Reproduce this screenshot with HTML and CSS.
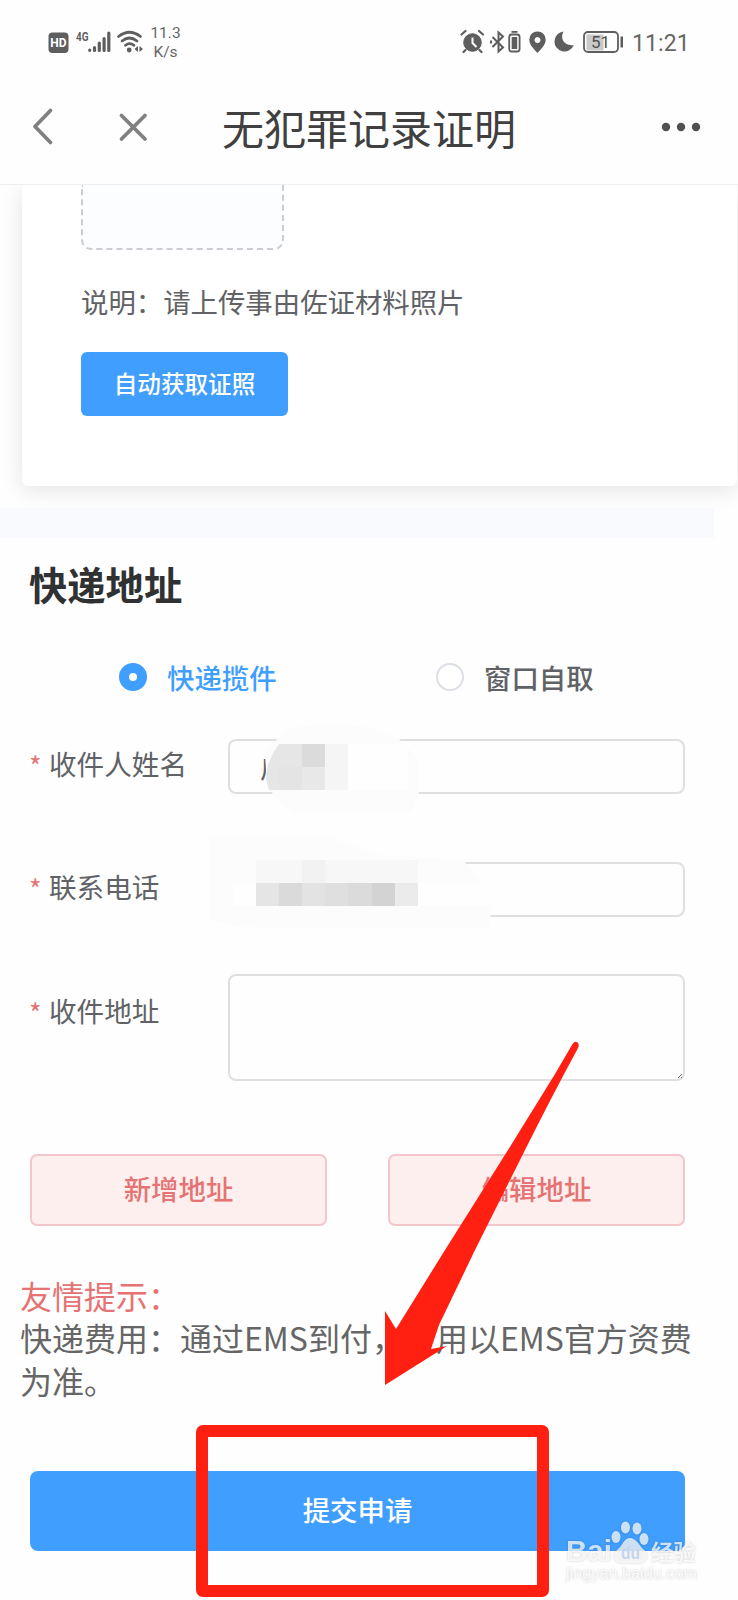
FILE: index.html
```html
<!DOCTYPE html>
<html lang="zh-CN">
<head>
<meta charset="utf-8">
<title>无犯罪记录证明</title>
<link rel="stylesheet" href="styles.css">
</head>
<body>
<div class="screen">
  <div class="status">
    <svg class="status-left" width="98" height="32" viewBox="0 0 98 32">
      <rect x="0.500" y="6.500" width="20" height="20.500" rx="4" fill="#5e5e5e"/>
      <text x="10.500" y="21.300" class="hd" text-anchor="middle">HD</text>
      <text x="28" y="15" class="gen" textLength="12.500" lengthAdjust="spacingAndGlyphs">4G</text>
      <g stroke="#5e5e5e" stroke-width="3.200" stroke-linecap="round">
        <path d="M41.700 24.200v.1M46.500 24.500v-3M51.300 24.500v-7.500M56.100 24.500v-12M60.800 24.500V7"/>
      </g>
      <g fill="none" stroke="#5e5e5e" stroke-width="2.700" stroke-linecap="round">
        <path d="M70.500 10.500q11-8.500 22 0M74 15q7.500-6 15 0M77.500 19.300q4-3.200 8.500 0"/>
      </g>
      <circle cx="81.200" cy="24" r="2.400" fill="#5e5e5e"/>
      <path d="M90 20v6l-3.500-3zM91.500 20v6l3.500-3z" fill="#5e5e5e"/>
    </svg>
    <div class="speed"><span>11.3</span><span>K/s</span></div>
    <svg class="status-right" width="164" height="32" viewBox="0 0 164 32">
      <g fill="#5e5e5e" stroke="#5e5e5e">
        <circle cx="12.500" cy="16.500" r="8.800"/>
        <path d="M1.500 8.500l4-3.500M19 5l4 3.500M5.500 24l-2 2M19.500 24l2 2" stroke-width="2.200" stroke-linecap="round"/>
        <path d="M12.500 11.500V17l4 4" fill="none" stroke="#fff" stroke-width="2"/>
      </g>
      <path d="M32.500 11L43 21.500 38.500 25.500V6.500L43 10.500 32.500 21M31 14.500v3" fill="none" stroke="#5e5e5e" stroke-width="2"/>
      <g fill="#5e5e5e">
        <path d="M51.500 5h6v1.800h-6z"/>
        <rect x="49.200" y="8.500" width="10.400" height="17" rx="2.500" fill="none" stroke="#5e5e5e" stroke-width="1.800"/>
        <rect x="51.700" y="11" width="5.500" height="12"/>
        <path d="M77.500 5.500a8 8 0 0 1 8.200 8.200c0 4.500-4.500 9.500-8.200 13.300-3.700-3.800-8.200-8.800-8.200-13.300a8 8 0 0 1 8.200-8.200zm0 5.600a3 3 0 1 0 .01 0z" fill-rule="evenodd"/>
        <path d="M103.500 5.500c-4 7 1 15 10.300 13.500a10 10 0 1 1-10.300-13.500z"/>
        <rect x="126.500" y="8.500" width="17" height="16" fill="#c9c9c9"/>
        <rect x="124" y="6" width="34" height="20" rx="4" fill="none" stroke="#5e5e5e" stroke-width="1.800"/>
        <path d="M160.500 10.500h2.500v11h-2.500z"/>
      </g>
      <text x="131" y="22" class="battery">51</text>
    </svg>
    <span class="clock">11:21</span>
  </div>

  <header class="nav">
    <svg class="nav-icons" width="120" height="40" viewBox="0 0 120 40">
      <path d="M20.500 4.500L5 20.500l15.500 16" fill="none" stroke="#808080" stroke-width="3.800" stroke-linecap="round" stroke-linejoin="round"/>
      <path d="M91.500 9.500l23.500 23.500M115 9.500L91.500 33" fill="none" stroke="#808080" stroke-width="3.800" stroke-linecap="round"/>
    </svg>
    <h1 class="title">无犯罪记录证明</h1>
    <svg class="more" width="40" height="10" viewBox="0 0 40 10" fill="#505050"><circle cx="5" cy="5" r="4.200"/><circle cx="20" cy="5" r="4.200"/><circle cx="35" cy="5" r="4.200"/></svg>
  </header>

  <section class="card-area">
    <div class="card">
      <div class="upload"></div>
      <p class="note">说明：请上传事由佐证材料照片</p>
      <button class="fetch">自动获取证照</button>
    </div>
    <div class="band"></div>
  </section>

  <section class="address">
    <h2 class="heading">快递地址</h2>
    <div class="radios">
      <label class="radio checked"><i class="dot"></i>快递揽件</label>
      <label class="radio"><i class="dot"></i>窗口自取</label>
    </div>
    <div class="row name-row"><span class="star">*</span><span class="label">收件人姓名</span>
      <div class="input">广
        <svg class="mosaic mosaic-name" width="156" height="92" viewBox="0 0 156 92">
          <path d="M0 32L8 20 24 6Q64-4 105 5L134 16 150 32 154 44V70L144 90H30L14 80 2 62z" fill="#fcfcfc"/>
          <path d="M3 42L8 30 14 21H60V67H4Q-1 55 3 42z" fill="#e6e6e6"/>
          <path d="M14 44h23v23H14z" fill="#e4e4e4"/><path d="M37 21h23v23H37z" fill="#dbdbdb"/><path d="M37 44h23v23H37z" fill="#e8e8e8"/><path d="M60 21h23v46H60z" fill="#f5f5f5"/><path d="M83 21h60v46H83z" fill="#fefefe"/>
        </svg>
      </div>
    </div>
    <div class="row phone-row"><span class="star">*</span><span class="label">联系电话</span>
      <div class="input">
        <svg class="mosaic mosaic-phone" width="284" height="94" viewBox="0 0 284 94">
          <path d="M0 0H120L170 18 254 23 274 46H283V69L280 91H80L30 90 0 82z" fill="#fcfcfc"/>
          <path d="M24 46h23v23H24z" fill="#fefefe"/><path d="M47 23h162v23H47z" fill="#f7f7f7"/><path d="M93 23h23v23H93z" fill="#f2f2f2"/><path d="M209 46h74v23h-74z" fill="#fefefe"/>
          <path d="M47 46h23v23H47z" fill="#e5e5e5"/><path d="M70 46h23v23H70z" fill="#dadada"/><path d="M93 46h23v23H93z" fill="#e3e3e3"/><path d="M116 46h23v23h-23z" fill="#dfdfdf"/><path d="M139 46h24v23h-24z" fill="#dbdbdb"/><path d="M163 46h23v23h-23z" fill="#d3d3d3"/><path d="M186 46h23v23h-23z" fill="#ebebeb"/>
        </svg>
      </div>
    </div>
    <div class="row place-row"><span class="star">*</span><span class="label">收件地址</span>
      <div class="input area"><svg class="grip" width="6" height="6" viewBox="0 0 6 6"><path d="M1 5l4-4M4 5l1-1" stroke="#555" stroke-width=".8"/></svg></div>
    </div>
    <div class="pair">
      <button class="soft">新增地址</button>
      <button class="soft">编辑地址</button>
    </div>
    <div class="tips">
      <p class="tips-title">友情提示：</p>
      <p>快递费用：通过EMS到付，费用以EMS官方资费为准。</p>
    </div>
    <button class="submit">提交申请</button>
  </section>

  <svg class="arrow" width="200" height="350" viewBox="380 1040 200 350">
    <path d="M572.500 1044Q575 1040.500 577.500 1042.500T577.500 1049Q552 1096 525 1150L475 1250 439 1325 431 1349 447 1346 385 1385V1311L396 1329 445 1250 508 1150 555 1074z" fill="#ff2012"/>
  </svg>
  <div class="frame"></div>
  <svg class="watermark" width="140" height="70" viewBox="0 0 140 70">
    <g class="wm-mark">
      <text x="4" y="44" class="wm-logo" textLength="46" lengthAdjust="spacingAndGlyphs">Bai</text>
      <ellipse cx="54" cy="20" rx="4.500" ry="6"/><ellipse cx="63.500" cy="10.500" rx="4.500" ry="6"/><ellipse cx="75" cy="11.500" rx="4.500" ry="6"/><ellipse cx="82" cy="22" rx="4.500" ry="6"/>
      <path d="M68 21c6 0 9 7 13 11 7 5 4 14-4 14H59c-8 0-9-9-3-14 5-4 6-11 12-11z"/>
      <text x="89" y="43" class="wm-cn" textLength="45" lengthAdjust="spacingAndGlyphs">经验</text>
      <text x="4" y="62" class="wm-url" textLength="131" lengthAdjust="spacingAndGlyphs">jingyan.baidu.com</text>
    </g>
    <text x="59" y="42" class="wm-du" textLength="19" lengthAdjust="spacingAndGlyphs">du</text>
  </svg>
</div>
</body>
</html>
```
FILE: styles.css
```css
* { box-sizing: border-box; }
body {
  margin: 0;
  background: #fefefe;
  font-family: "Noto Sans CJK SC", sans-serif;
  color: #606266;
}
h1, h2, p { margin: 0; font-weight: 400; }
button { font-family: inherit; padding: 0; border: 0; }
.screen { position: relative; width: 738px; height: 1600px; overflow: hidden; }

.status { display: flex; height: 84px; padding: 26px 0 0 48px; align-items: flex-start; font-family: Roboto, sans-serif; color: #666; }
.status svg { flex: none; }
.hd { font: 700 12px Roboto, sans-serif; fill: #fff; }
.gen { font: 700 13px Roboto, sans-serif; fill: #5e5e5e; }
.battery { font: 400 17px Roboto, sans-serif; fill: #505050; }
.speed { display: flex; flex-direction: column; align-items: center; width: 31px; margin-left: 4px; font-size: 15.500px; line-height: 18.500px; margin-top: -2px; }
.status-right { margin-left: 279px; }
.clock { margin-left: 8px; font-size: 23px; line-height: 35px; letter-spacing: .1px; }

.nav { display: flex; height: 101px; border-bottom: 1px solid #eee; }
.nav-icons { margin: 22px 0 0 30px; flex: none; }
.title { margin-left: 72px; width: 300px; font-size: 42px; line-height: 86px; color: #404040; white-space: nowrap; }
.more { margin: 38px 0 0 139px; flex: none; }

.card-area { height: 353px; overflow: hidden; }
.card { width: 715px; height: 301px; margin-left: 22px; padding-left: 59px; background: #fff; border-radius: 0 0 6px 6px; box-shadow: 0 4px 22px rgba(0, 0, 0, .11); }
.upload { width: 203px; height: 65px; border: 2px dashed #cccdd2; border-top: 0; border-radius: 0 0 10px 10px; background: #fbfdff; }
.note { margin-top: 31px; font-size: 27.400px; line-height: 40px; color: #606266; }
.fetch { display: block; width: 207px; height: 64px; margin-top: 31px; padding-bottom: 2px; border-radius: 6px; background: #409eff; color: #fff; font-size: 23.600px; font-weight: 500; line-height: 60px; }
.band { position: relative; width: 714px; height: 30px; margin-top: 22px; background: #f9fafe; }

.address { padding-left: 30px; }
.heading { margin: 19px 0 0 -1px; font-size: 38.300px; line-height: 54px; font-weight: 700; color: #303133; }
.radios { display: flex; height: 40px; margin-top: 46px; padding-left: 89px; }
.radio { display: flex; align-items: center; width: 317px; gap: 20px; font-size: 27.400px; font-weight: 500; line-height: 38px; flex: none; }
.radio.checked { color: #409eff; }
.dot { width: 28px; height: 28px; border: 2px solid #dcdfe6; border-radius: 50%; background: #fff; }
.checked .dot { border: 10px solid #409eff; }
.row { display: flex; width: 655px; align-items: flex-start; }
.star { width: 20px; margin-left: -1px; font-size: 27px; line-height: 53px; color: #e57373; }
.label { width: 179px; font-size: 27.600px; line-height: 48px; }
.input { position: relative; width: 457px; height: 55px; padding-left: 30px; border: 2px solid #dfdfe1; border-radius: 8px; font-size: 27.400px; line-height: 50px; }
.name-row { margin-top: 42px; }
.phone-row { margin-top: 68px; }
.place-row { margin-top: 57px; }
.place-row .star, .place-row .label { margin-top: 12px; }
.area { height: 107px; }
.mosaic { position: absolute; }
.mosaic-name { left: 35px; top: -18px; }
.mosaic-phone { left: -21px; top: -27px; }
.grip { position: absolute; right: 0; bottom: 0; }

.pair { display: flex; width: 655px; justify-content: space-between; margin-top: 73px; }
.soft { width: 297px; height: 72px; padding-bottom: 4px; border: 2px solid #f3c6cc; border-radius: 7px; background: #feefef; color: #e57373; font-size: 27.400px; font-weight: 500; line-height: 62px; }
.tips { width: 680px; margin: 48px 0 0 -10px; font-size: 32px; line-height: 42.300px; color: #666; }
.tips-title { color: #e57373; }
.submit { display: block; width: 655px; height: 80px; margin-top: 70px; padding-bottom: 4px; border-radius: 8px; background: #409eff; color: #fff; font-size: 27.400px; font-weight: 500; line-height: 72px; }

.arrow { position: absolute; left: 380px; top: 1040px; }
.frame { position: absolute; left: 196px; top: 1425px; width: 353px; height: 172px; border: 12px solid #ff2012; border-radius: 7px; }
.watermark { position: absolute; left: 562px; top: 1517px; }
.wm-mark { fill: rgba(255, 255, 255, .75); filter: drop-shadow(0 0 1px rgba(0, 0, 0, .25)); }
.wm-logo { font: 700 29px "Liberation Sans", sans-serif; }
.wm-cn { font: 700 22px "Noto Sans CJK SC", sans-serif; }
.wm-url { font: 400 16px "Liberation Sans", sans-serif; }
.wm-du { font: 700 18px "Liberation Sans", sans-serif; fill: #c3d6ec; }
```
